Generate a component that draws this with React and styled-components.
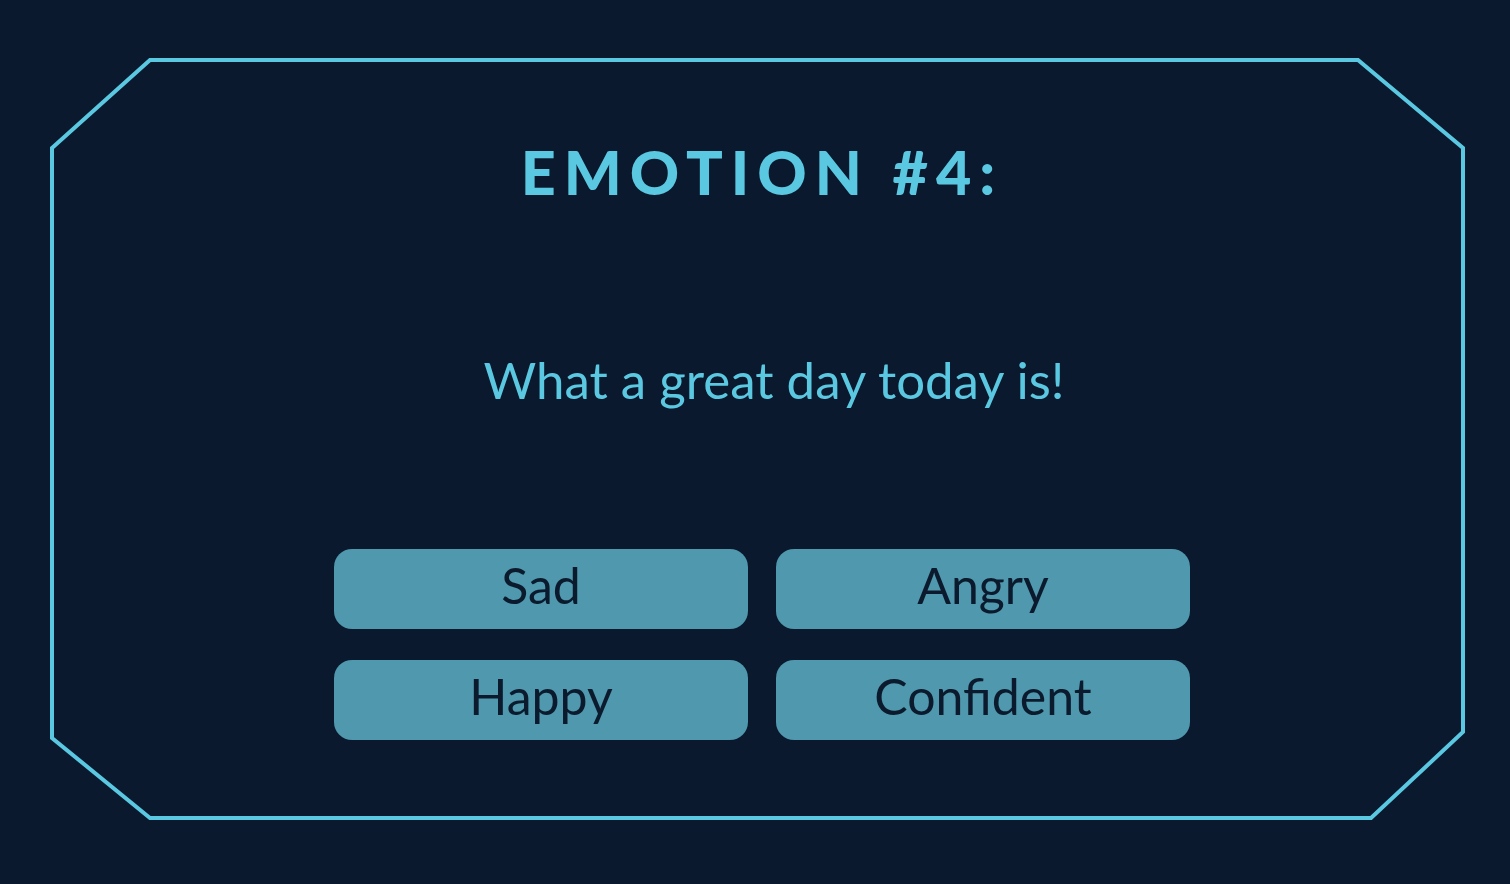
import React from "react";
import styled, { createGlobalStyle } from "styled-components";

const GlobalStyle = createGlobalStyle`
  html, body {
    margin: 0;
    padding: 0;
    background: #0a192d;
  }
  body {
    font-family: Lato, "Open Sans", sans-serif;
  }
`;

const Page = styled.div`
  width: 1510px;
  height: 884px;
  padding: 58px 0 0 50px;
  box-sizing: border-box;
`;

const Card = styled.div`
  position: relative;
  width: 1416px;
  height: 763px;
  display: flex;
  flex-direction: column;
  align-items: center;
  padding-left: 8px;
  box-sizing: border-box;
`;

const Frame = styled.svg`
  position: absolute;
  inset: 0;
  pointer-events: none;
`;

const Title = styled.h1`
  margin: 76px 0 0;
  color: #5bc8e2;
  font-size: 61px;
  font-weight: 900;
  letter-spacing: 8px;
  line-height: 76px;
`;

const Prompt = styled.p`
  margin: 140px 0 0;
  padding-left: 24px;
  color: #5bc8e2;
  font-size: 51px;
  font-weight: 400;
  line-height: 60px;
`;

const Choices = styled.div`
  margin-top: 139px;
  display: grid;
  grid-template-columns: 414px 414px;
  column-gap: 28px;
  row-gap: 31px;
`;

const Choice = styled.button`
  height: 80px;
  border: none;
  border-radius: 18px;
  background: #4f98ad;
  color: #0b1a2d;
  font-family: Lato, "Open Sans", sans-serif;
  font-size: 50px;
  font-weight: 400;
  padding: 0 0 8px;
  cursor: pointer;
`;

const options = ["Sad", "Angry", "Happy", "Confident"];

export default function App() {
  return (
    <>
      <GlobalStyle />
      <Page>
        <Card>
          <Frame width="1416" height="763" viewBox="0 0 1416 763">
            <polygon
              points="2,90 100,2 1308,2 1413,90 1413,674 1321,760 100,760 2,680"
              fill="none"
              stroke="#5bc8e2"
              strokeWidth="4"
            />
          </Frame>
          <Title>EMOTION #4:</Title>
          <Prompt>What a great day today is!</Prompt>
          <Choices>
            {options.map((o) => (
              <Choice key={o}>{o}</Choice>
            ))}
          </Choices>
        </Card>
      </Page>
    </>
  );
}
